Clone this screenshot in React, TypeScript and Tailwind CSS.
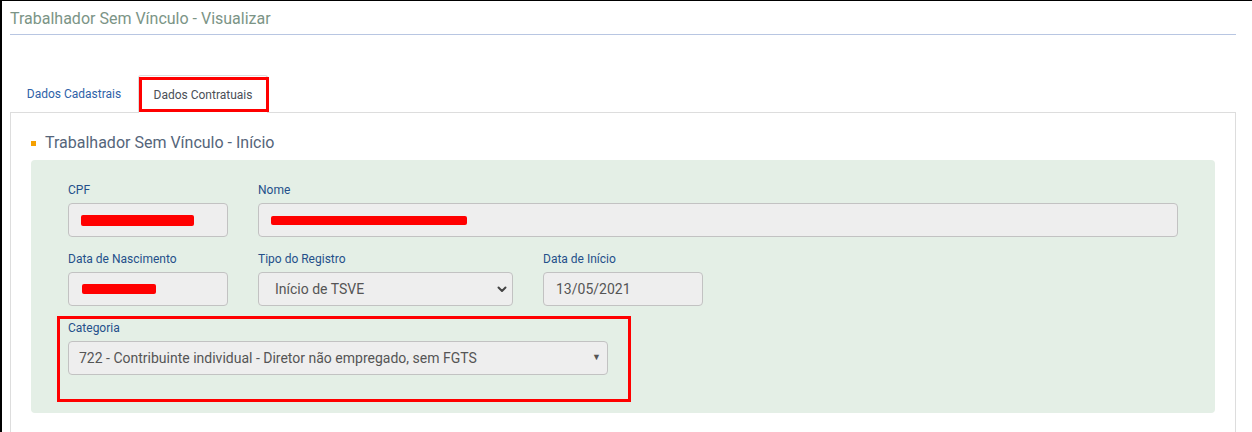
const label = "block text-[12px] leading-[14px] text-[#24508a] mb-[6px]";
const field =
  "h-[34px] rounded-[4px] border border-[#c2c2c2] bg-[#eeeeee] flex items-center text-[14px] text-[#555555]";

function Redacted({ w, h = 10 }: { w: number; h?: number }) {
  return <span className="block bg-[#ff0000] rounded-[2px]" style={{ width: w, height: h }} />;
}

function Chevron() {
  return (
    <svg width="12" height="12" viewBox="0 0 12 12" className="ml-auto mr-[4px]">
      <path d="M2.5 4.5 L6 8 L9.5 4.5" fill="none" stroke="#444" strokeWidth="2" strokeLinecap="round" strokeLinejoin="round" />
    </svg>
  );
}

export default function App() {
  return (
    <div className="w-[1252px] h-[432px] overflow-hidden bg-white border-t border-l-2 border-black font-['Roboto',sans-serif]">
      <div className="ml-[8px] mr-[16px]">
        <div className="h-[34px] border-b border-[#b8c6e2] pt-[8px] text-[16px] leading-[20px] text-[#7b9486]">
          Trabalhador Sem Vínculo - Visualizar
        </div>

        <div className="mt-[40px] flex items-end h-[38px] border-b border-[#dddddd]">
          <div className="w-[128px] h-[38px] flex items-center justify-center pt-[1px] text-[12px] text-[#2f62a8]">
            Dados Cadastrais
          </div>
          <div className="relative w-[130px] h-[38px] -mb-px bg-white border border-b-0 border-[#dddddd] rounded-t-[3px] flex items-center justify-center pt-[1px] text-[12px] text-[#4a4f57]">
            Dados Contratuais
            <div className="absolute left-[0px] top-[1px] w-[130px] h-[35px] border-[3px] border-[#ff0000]" />
          </div>
        </div>

        <div className="border-l border-r border-[#dddddd] h-[320px] px-[20px] pt-[20px]">
          <div className="flex items-center gap-[9px] h-[20px]">
            <span className="w-[5px] h-[5px] bg-[#f5a000]" />
            <span className="text-[16px] text-[#55657a]">Trabalhador Sem Vínculo - Início</span>
          </div>

          <div className="mt-[7px] h-[253px] rounded-[4px] bg-[#e4efe6] pl-[37px] pr-[37px] pt-[23px]">
            <div className="flex gap-[30px]">
              <div className="w-[160px]">
                <span className={label}>CPF</span>
                <div className={field + " pl-[12px]"}>
                  <Redacted w={113} h={11} />
                </div>
              </div>
              <div className="flex-1">
                <span className={label}>Nome</span>
                <div className={field + " pl-[12px]"}>
                  <Redacted w={196} h={9} />
                </div>
              </div>
            </div>

            <div className="flex gap-[30px] mt-[15px]">
              <div className="w-[160px]">
                <span className={label}>Data de Nascimento</span>
                <div className={field + " pl-[13px]"}>
                  <Redacted w={74} h={10} />
                </div>
              </div>
              <div className="w-[255px]">
                <span className={label}>Tipo do Registro</span>
                <div className={field + " pl-[16px]"}>
                  Início de TSVE
                  <Chevron />
                </div>
              </div>
              <div className="w-[160px]">
                <span className={label}>Data de Início</span>
                <div className={field + " pl-[12px]"}>13/05/2021</div>
              </div>
            </div>

            <div className="relative mt-[15px] w-[540px]">
              <div className="absolute left-[-11px] top-[-5px] w-[574px] h-[86px] border-[3px] border-[#ff0000]" />
              <span className={label}>Categoria</span>
              <div className={field + " pl-[10px]"}>
                722 - Contribuinte individual - Diretor não empregado, sem FGTS
                <span className="ml-auto mr-[6px] text-[9px] text-[#555]">▼</span>
              </div>
            </div>
          </div>
        </div>
      </div>
    </div>
  );
}
